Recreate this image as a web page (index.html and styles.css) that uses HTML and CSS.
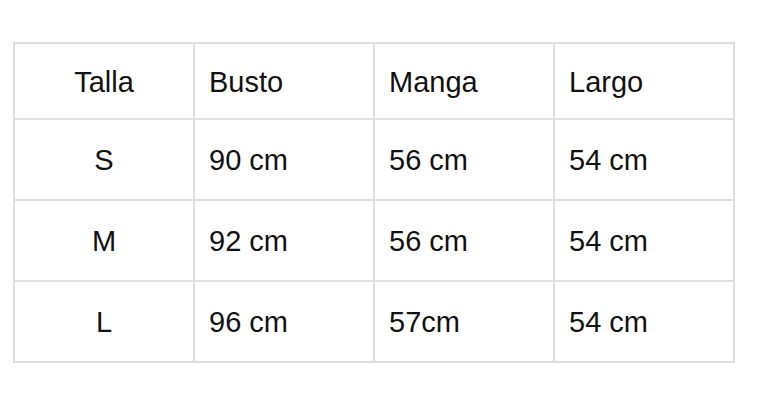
FILE: index.html
```html
<!DOCTYPE html>
<html lang="es">
<head>
<meta charset="utf-8">
<link rel="stylesheet" href="styles.css">
</head>
<body>
<div class="wrap">
<table class="sizes">
  <colgroup><col class="col"><col class="col"><col class="col"><col class="col"></colgroup>
  <thead>
    <tr class="head"><th class="c">Talla</th><th>Busto</th><th>Manga</th><th>Largo</th></tr>
  </thead>
  <tbody>
    <tr><td class="c">S</td><td>90 cm</td><td>56 cm</td><td>54 cm</td></tr>
    <tr><td class="c">M</td><td>92 cm</td><td>56 cm</td><td>54 cm</td></tr>
    <tr><td class="c">L</td><td>96 cm</td><td>57cm</td><td>54 cm</td></tr>
  </tbody>
</table>
</div>
</body>
</html>
```
FILE: styles.css
```css
html, body { margin: 0; background: #fff; }
body { font-family: "Liberation Sans", Arial, sans-serif; color: #111; }
.wrap { padding: 42px 0 0 13px; }
.sizes {
  border-collapse: collapse;
  table-layout: fixed;
  width: 722px;
}
.sizes .col { width: 25%; }
.sizes th, .sizes td {
  border: 2px solid #dedede;
  font-size: 29px;
  font-weight: normal;
  text-align: left;
  padding: 2px 0 0 14px;
}
.sizes .c { text-align: center; padding: 2px 0 0 0; }
.sizes tr { height: 81px; }
.sizes tr.head { height: 76px; }
```
